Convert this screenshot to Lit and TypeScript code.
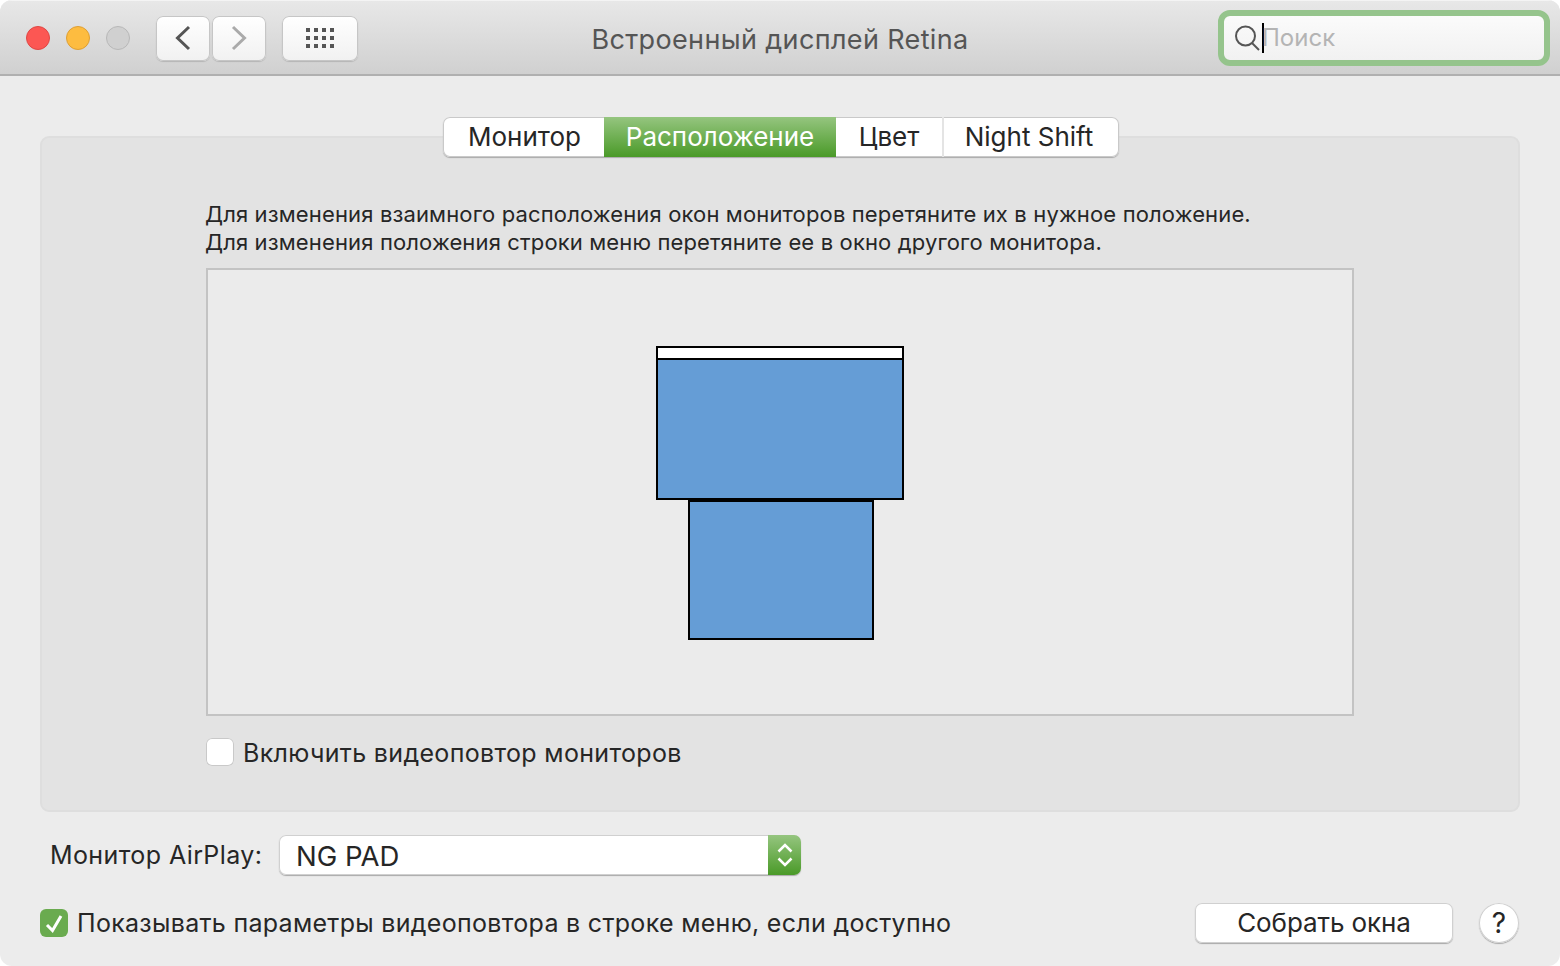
import { LitElement, html, css, svg } from "lit";
import { customElement } from "lit/decorators.js";

@customElement("app-root")
export class AppRoot extends LitElement {
  static styles = css`
    :host { display: block; width: 1560px; height: 966px; background: #fff; font-family: Inter, "Liberation Sans", sans-serif; color: #262626; overflow: hidden; }
    * { box-sizing: border-box; }
    .window { width: 1560px; height: 966px; background: #ececec; border-radius: 12px; overflow: hidden; display: flex; flex-direction: column; }
    .titlebar { height: 76px; flex: none; background: linear-gradient(#e8e8e8, #d0d0d0); border-bottom: 2px solid #b0b0b0; box-shadow: inset 0 1px 0 #f4f4f4; display: grid; grid-template-columns: minmax(0, 1fr) auto minmax(0, 1fr); align-items: center; padding: 2px 10px 0; }
    .left { display: flex; align-items: center; padding-left: 16px; }
    .light { width: 24px; height: 24px; border-radius: 50%; margin-right: 16px; border: 1px solid; flex: none; }
    .red { background: #fc5753; border-color: #df4744; }
    .yellow { background: #fdbc40; border-color: #de9f34; }
    .grey { background: #d0d0d0; border-color: #b8b8b8; margin-right: 26px; }
    .tbtn { height: 45px; background: linear-gradient(#fff, #f1f1f1); border-radius: 7px; box-shadow: 0 0 0 1px #c6c6c6 inset, 0 1px 1px #b5b5b5; display: flex; align-items: center; justify-content: center; flex: none; }
    .back, .fwd { width: 54px; }
    .fwd { margin-left: 2px; }
    .grid { width: 76px; margin-left: 16px; }
    .title { font-size: 27px; letter-spacing: 0.36px; color: #555; white-space: nowrap; padding-top: 2px; }
    .right { display: flex; justify-content: flex-end; }
    .search { width: 332px; height: 56px; border-radius: 12px; background: linear-gradient(#fbfbfb, #f1f1f1); border: 6px solid #95c48c; display: flex; align-items: center; padding-left: 10px; }
    .ph { font-size: 24px; color: #b4b4b4; margin-left: -2px; padding-bottom: 1px; }
    .caret { width: 2px; height: 30px; background: #000; margin-left: 2px; }
    .content { flex: 1; padding: 41px 41px 0 40px; display: flex; flex-direction: column; min-height: 0; }
    .panel { width: 1480px; height: 676px; flex: none; margin-top: 19px; background: #e3e3e3; border: 2px solid #dedede; border-radius: 9px; display: flex; flex-direction: column; align-items: center; }
    .tabs { flex: none; margin: -21px 0 0 2px; width: 676px; height: 40px; display: flex; background: #fff; border-radius: 7px; box-shadow: 0 0 0 1px #c9c9c9 inset, 0 1px 1px #a9a9a9; font-size: 26px; overflow: hidden; }
    .tab { display: flex; align-items: center; justify-content: center; flex: none; padding-bottom: 1px; }
    .t1 { width: 161px; padding-left: 2px; }
    .t2 { width: 232px; color: #fff; background: linear-gradient(#95c57f, #4a9a28); }
    .t3 { width: 108px; border-right: 2px solid #e4e4e4; }
    .t4 { width: 175px; padding-right: 5px; }
    .inner { width: 1148px; margin-top: 43px; }
    .hint { font-size: 22px; line-height: 28px; letter-spacing: 0.14px; white-space: nowrap; margin-left: -1px; }
    .canvas { position: relative; width: 1148px; height: 448px; margin-top: 12px; border: 2px solid #c3c3c3; background: #ebebeb; }
    .mon { position: absolute; background: #659dd6; border: 2px solid #000; }
    .m1 { left: 448px; top: 76px; width: 248px; height: 154px; }
    .bar { background: #fff; border-bottom: 2px solid #000; box-sizing: content-box; height: 10px; }
    .m2 { left: 480px; top: 230px; width: 186px; height: 140px; }
    .check { display: flex; align-items: center; gap: 9px; font-size: 25px; white-space: nowrap; letter-spacing: 0.3px; }
    .mirror { margin-top: 22px; height: 28px; letter-spacing: 0.33px; }
    .mirror .txt { padding-top: 2px; }
    .box { width: 28px; height: 28px; flex: none; border-radius: 6px; background: #fff; box-shadow: 0 0 0 1px #c9c9c9 inset; }
    .on { background: #6aab4f; box-shadow: none; display: flex; }
    .airplay { display: flex; align-items: center; height: 40px; margin-top: 23px; padding-left: 10px; }
    .label { font-size: 25px; width: 229px; white-space: nowrap; letter-spacing: 0.4px; }
    .select { width: 522px; height: 40px; display: flex; background: #fff; border-radius: 7px; box-shadow: 0 0 0 1px #d0d0d0 inset, 0 1px 1px #a9a9a9; overflow: hidden; }
    .val { flex: 1; font-size: 27.500px; padding-left: 17px; display: flex; align-items: center; padding-top: 2px; }
    .step { width: 33px; background: linear-gradient(#95c57f, #4a9a28); display: flex; align-items: center; justify-content: center; }
    .bottom { display: flex; align-items: center; height: 40px; margin-top: 28px; }
    .spacer { flex: 1; }
    .btn { width: 258px; height: 40px; border: 0; padding: 0 0 2px; color: inherit; font-family: inherit; background: #fff; border-radius: 7px; box-shadow: 0 0 0 1px #d0d0d0 inset, 0 1px 1px #a9a9a9; font-size: 26px; display: flex; align-items: center; justify-content: center; letter-spacing: -0.1px; }
    .help { width: 40px; height: 40px; margin-left: 26px; border-radius: 50%; background: #fff; box-shadow: 0 0 0 1px #d0d0d0 inset, 0 1px 1px #a9a9a9; font-size: 28px; display: flex; align-items: center; justify-content: center; }
  `;

  render() {
    return html`<div class="window">
      <header class="titlebar">
        <div class="left">
          <span class="light red"></span><span class="light yellow"></span><span class="light grey"></span>
          <div class="tbtn back"><svg width="18" height="26" viewBox="0 0 18 26"><path d="M15 2 3.500 13 15 24" fill="none" stroke="#555" stroke-width="3"/></svg></div>
          <div class="tbtn fwd"><svg width="18" height="26" viewBox="0 0 18 26"><path d="M3 2 14.500 13 3 24" fill="none" stroke="#aaa" stroke-width="3"/></svg></div>
          <div class="tbtn grid"><svg width="30" height="22" viewBox="0 0 30 22" fill="#555">
            ${[0, 8, 16].map(y => [0, 8, 16, 24].map(x => svg`<rect x=${x + 1} y=${y + 1} width="4" height="4"></rect>`))}
          </svg></div>
        </div>
        <div class="title">Встроенный дисплей Retina</div>
        <div class="right">
          <div class="search">
            <svg width="26" height="28" viewBox="0 0 26 28"><circle cx="11.500" cy="12" r="9.500" fill="none" stroke="#555" stroke-width="2"/><path d="M18 19l7 7" stroke="#555" stroke-width="2"/></svg>
            <span class="caret"></span><span class="ph">Поиск</span>
          </div>
        </div>
      </header>
      <main class="content">
        <section class="panel">
          <nav class="tabs">
            <div class="tab t1">Монитор</div>
            <div class="tab t2">Расположение</div>
            <div class="tab t3">Цвет</div>
            <div class="tab t4">Night Shift</div>
          </nav>
          <div class="inner">
            <div class="hint">Для изменения взаимного расположения окон мониторов перетяните их в нужное положение.<br>Для изменения положения строки меню перетяните ее в окно другого монитора.</div>
            <div class="canvas">
              <div class="mon m1"><div class="bar"></div></div>
              <div class="mon m2"></div>
            </div>
            <label class="check mirror"><span class="box"></span><span class="txt">Включить видеоповтор мониторов</span></label>
          </div>
        </section>
        <div class="airplay">
          <span class="label">Монитор AirPlay:</span>
          <div class="select">
            <div class="val">NG PAD</div>
            <div class="step"><svg width="18" height="30" viewBox="0 0 18 30"><path d="M2.500 11.500 9 5l6.500 6.500M2.500 18.500 9 25l6.500-6.500" fill="none" stroke="#fff" stroke-width="2.500"/></svg></div>
          </div>
        </div>
        <div class="bottom">
          <label class="check"><span class="box on"><svg width="28" height="28" viewBox="0 0 28 28"><path d="M7 16l5.500 5.500L21 7" fill="none" stroke="#fff" stroke-width="3"/></svg></span>Показывать параметры видеоповтора в строке меню, если доступно</label>
          <span class="spacer"></span>
          <button class="btn">Собрать окна</button>
          <div class="help">?</div>
        </div>
      </main>
    </div>`;
  }
}
